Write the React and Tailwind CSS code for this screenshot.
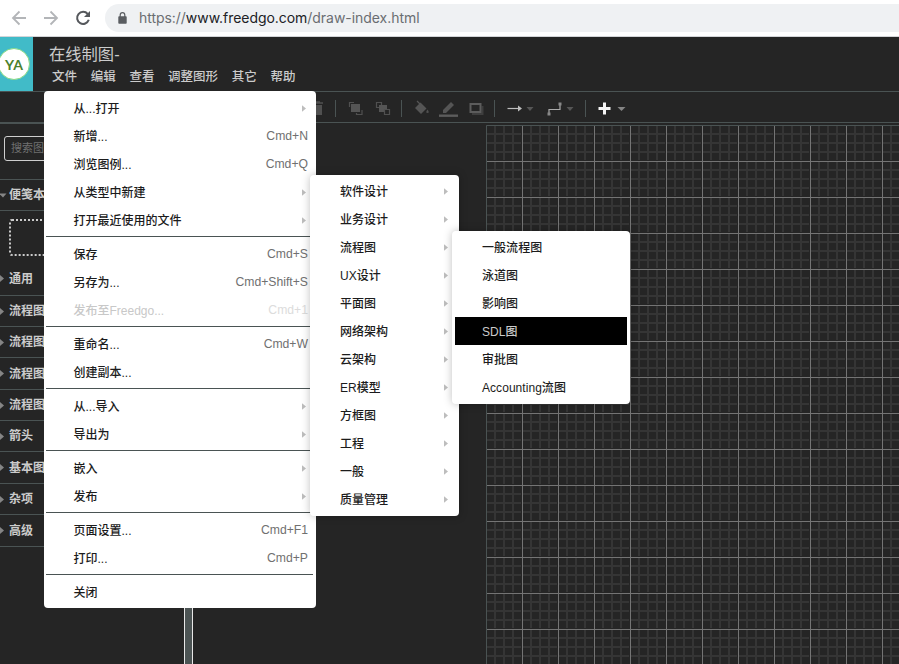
import React from "react";

const FILE_MENU = [
  { label: "从...打开", sub: true },
  { label: "新增...", key: "Cmd+N" },
  { label: "浏览图例...", key: "Cmd+Q" },
  { label: "从类型中新建", sub: true },
  { label: "打开最近使用的文件", sub: true },
  null,
  { label: "保存", key: "Cmd+S" },
  { label: "另存为...", key: "Cmd+Shift+S" },
  { label: "发布至Freedgo...", key: "Cmd+1", disabled: true },
  null,
  { label: "重命名...", key: "Cmd+W" },
  { label: "创建副本..." },
  null,
  { label: "从...导入", sub: true },
  { label: "导出为", sub: true },
  null,
  { label: "嵌入", sub: true },
  { label: "发布", sub: true },
  null,
  { label: "页面设置...", key: "Cmd+F1" },
  { label: "打印...", key: "Cmd+P" },
  null,
  { label: "关闭" },
];

const TYPE_MENU = ["软件设计", "业务设计", "流程图", "UX设计", "平面图", "网络架构", "云架构", "ER模型", "方框图", "工程", "一般", "质量管理"];
const FLOW_MENU = ["一般流程图", "泳道图", "影响图", "SDL图", "审批图", "Accounting流图"];

const SECTIONS = [
  { name: "流程图", h: "h-[31px]" },
  { name: "流程图", h: "h-[31px]" },
  { name: "流程图", h: "h-[32px]" },
  { name: "流程图", h: "h-[31px]" },
  { name: "箭头", h: "h-[31px]" },
  { name: "基本图形", h: "h-[32px]" },
  { name: "杂项", h: "h-[31px]" },
  { name: "高级", h: "h-[32px]" },
];

function SubArrow() {
  return (
    <svg className="h-[7px] w-1" viewBox="0 0 4 7">
      <path d="M0 0.3L4 3.5L0 6.7Z" fill="#bdbdbd" />
    </svg>
  );
}

function BrowserBar() {
  return (
    <div className="flex h-[37px] shrink-0 items-center border-b border-[#d3d5d8] bg-white">
      <svg className="h-[36px] w-[105px] shrink-0" viewBox="0 0 105 36" fill="none" strokeWidth="1.8">
        <path d="M26 18H13M19.5 11.5L13 18L19.5 24.5" stroke="#b3b5b8" />
        <path d="M44 18H57M50.5 11.5L57 18L50.5 24.5" stroke="#b3b5b8" />
        <path d="M87.7 14A6 6 0 1 0 88.8 19.8" stroke="#55585c" strokeWidth="2" />
        <path d="M90 11V17H84Z" fill="#55585c" />
      </svg>
      <div className="mr-[-20px] flex h-7 flex-1 items-center rounded-l-full bg-[#eff1f3] pl-[13px]">
        <svg className="h-3 w-[9px]" viewBox="0 0 9 12">
          <rect x="0.3" y="4.3" width="8.4" height="7.4" rx="0.8" fill="#5a5d61" />
          <path d="M2.2 5V3A2.3 2.3 0 0 1 6.8 3V5" fill="none" stroke="#5a5d61" strokeWidth="1.2" />
        </svg>
        <span className="ml-3 whitespace-nowrap pb-px font-['Inter','Liberation_Sans',sans-serif] text-[14px] tracking-[-0.045px] text-[#202124]">
          <span className="text-[#6a6d71]">https://</span>www.freedgo.com<span className="text-[#6a6d71]">/draw-index.html</span>
        </span>
      </div>
    </div>
  );
}

function Header() {
  return (
    <div className="flex h-[54px] shrink-0">
      <div className="flex w-[33px] items-center overflow-hidden bg-[#41bbc8]">
        <div className="-ml-[2px] flex size-8 shrink-0 items-center justify-center rounded-full border border-[#86d985] bg-white pt-px text-[14px] font-bold tracking-[0.2px] text-[#4b812d] font-['Lato',sans-serif]">
          YA
        </div>
      </div>
      <div className="flex flex-col pl-4 pt-[7px] text-[#cbcbcb]">
        <div className="h-5 whitespace-nowrap text-[16.3px] leading-5">在线制图-</div>
        <div className="mt-[3px] flex gap-[13.7px] whitespace-nowrap pl-[3px] text-[12.5px] font-medium leading-5">
          <span>文件</span>
          <span>编辑</span>
          <span>查看</span>
          <span>调整图形</span>
          <span>其它</span>
          <span>帮助</span>
        </div>
      </div>
    </div>
  );
}

function Toolbar() {
  return (
    <div className="h-8 shrink-0 border-y border-[#4a5353]">
      <svg className="ml-[300px] h-[30px] w-[340px]" viewBox="300 92 340 30" fill="none">
        <path d="M335.5 100V117M401.5 100V117M494.5 100V117M585.5 100V117" stroke="#4a5353" />
        <path d="M313 103H323M316 102H320" stroke="#505050" strokeWidth="1.6" />
        <path d="M314 105H322V115H314Z" fill="#505050" />
        <path d="M351 104H360V112H351Z" fill="#555" />
        <path d="M349.5 107V102.5H354M362 110V114.500H356.500V113" stroke="#505050" strokeWidth="1.2" />
        <path d="M376.500 102.500H381.500V107.500H376.500Z" stroke="#505050" strokeWidth="1.2" />
        <path d="M379 105H387V112H379Z" fill="#555" />
        <path d="M384.500 109.500H389.500V114.500H384.500Z" fill="#252525" stroke="#505050" strokeWidth="1.2" />
        <path d="M415 108L420.500 102.500L426.500 108.500L421 114Z" fill="#555" />
        <path d="M417 101L421 105" stroke="#555" strokeWidth="1.2" />
        <path d="M427.500 109.500Q430 113 427.500 113Q425 113 427.500 109.500" fill="#505050" />
        <path d="M443 110L451 102L454 105L446 113H443Z" fill="#555" />
        <path d="M439 115.700H458" stroke="#5c5c5c" strokeWidth="2.4" />
        <path d="M472 114H482.500V106" stroke="#3e3e3e" strokeWidth="2" />
        <path d="M470.500 104H480.500V112H470.500Z" stroke="#5c5c5c" strokeWidth="2" />
        <path d="M507.500 108.500H520" stroke="#bdbdbd" strokeWidth="1.2" />
        <path d="M518 105.500L522 108.500L518 111.500Z" fill="#bdbdbd" />
        <path d="M526.500 107H533.500L530 111Z" fill="#565656" />
        <path d="M549 114V109.500H560V104" stroke="#aaa" strokeWidth="1.2" />
        <path d="M547.500 112.500H550.500V115.500H547.500ZM558.500 102.500H561.500V105.500H558.500Z" fill="#888" />
        <path d="M566.500 107H573.500L570 111Z" fill="#565656" />
        <path d="M604.500 102.500V114.500M598.500 108.500H610.500" stroke="#f5f5f5" strokeWidth="3" />
        <path d="M617.500 107H625.500L621.500 111Z" fill="#858585" />
      </svg>
    </div>
  );
}

function Sidebar() {
  return (
    <div className="w-[184px] shrink-0 overflow-hidden text-[12px] font-bold text-[#cbcbcb]">
      <div className="h-[56px] border-t border-[#4a5353] pl-1 pt-3">
        <div className="flex h-[25px] w-[170px] items-center rounded-[3px] border border-[#cfcfcf] pl-[6px] text-[11px] font-normal text-[#707070]">
          搜索图形
        </div>
      </div>
      <div className="flex h-[32px] items-center gap-[2px] border-y border-[#4a5353]">
        <svg className="h-[5px] w-[7px]" viewBox="0 0 7 5"><path d="M-1 0.500H6.500L3 4.500Z" fill="#858585" /></svg>
        便笺本
      </div>
      <div className="ml-[9px] mt-2 h-[37px] w-[160px] rounded-[3px] border-2 border-dotted border-[#cbcbcb]" />
      <div className="flex h-[40px] items-center gap-[5px] border-b border-[#4a5353] pt-[6px]">
        <svg className="h-[9px] w-[4px]" viewBox="0 0 4 9"><path d="M0 1L4 4.500L0 8Z" fill="#858585" /></svg>
        通用
      </div>
      {SECTIONS.map((s, i) => (
        <div key={i} className={"flex items-center gap-[5px] border-b border-[#4a5353] " + s.h}>
          <svg className="h-[9px] w-[4px]" viewBox="0 0 4 9"><path d="M0 1L4 4.500L0 8Z" fill="#858585" /></svg>
          {s.name}
        </div>
      ))}
    </div>
  );
}

function Canvas() {
  return (
    <svg className="ml-[293px] mt-[2px] block h-[539px] w-[413px] shrink-0" viewBox="486 125 413 539">
      <defs>
        <pattern id="minor" x="494" y="133" width="9" height="9" patternUnits="userSpaceOnUse">
          <path d="M0 0H9V2H0ZM0 2H2V9H0Z" fill="#353535" />
        </pattern>
      </defs>
      <rect x="486" y="125" width="413" height="539" fill="url(#minor)" />
      <path
        d="M522 125V664M558 125V664M594 125V664M630 125V664M666 125V664M702 125V664M738 125V664M774 125V664M810 125V664M846 125V664M882 125V664M486 161H899M486 197H899M486 233H899M486 269H899M486 305H899M486 341H899M486 377H899M486 413H899M486 449H899M486 485H899M486 521H899M486 557H899M486 593H899M486 629H899"
        stroke="#252525"
        strokeWidth="2"
      />
      <path
        d="M522.500 125V664M558.500 125V664M594.500 125V664M630.500 125V664M666.500 125V664M702.500 125V664M738.500 125V664M774.500 125V664M810.500 125V664M846.500 125V664M882.500 125V664M486 161.500H899M486 197.500H899M486 233.500H899M486 269.500H899M486 305.500H899M486 341.500H899M486 377.500H899M486 413.500H899M486 449.500H899M486 485.500H899M486 521.500H899M486 557.500H899M486 593.500H899M486 629.500H899"
        stroke="#747474"
      />
      <path d="M486.500 664V125.500H899" fill="none" stroke="#4a5353" />
    </svg>
  );
}

export default function App() {
  return (
    <div className="relative flex h-[664px] w-[899px] flex-col overflow-hidden bg-[#252525] font-['Liberation_Sans','Noto_Sans_CJK_SC',sans-serif]">
      <BrowserBar />
      <Header />
      <Toolbar />
      <div className="flex min-h-0 flex-1">
        <Sidebar />
        <div className="w-[9px] shrink-0 border-x border-[#e8e8e8] bg-[#4c5454]" />
        <Canvas />
      </div>

      <div className="absolute left-[44px] top-[91px] h-[517px] w-[272px] rounded bg-white pt-[3px] text-[12px] font-medium text-[#1c1c1c]">
        {FILE_MENU.map((m, i) =>
          m ? (
            <div key={i} className={"flex h-7 items-center justify-between pl-[29.5px] " + (m.disabled ? "text-[#c8c8c8]" : "")}>
              <span className="pt-[2px]">{m.label}</span>
              {m.sub && <span className="mr-[10px]"><SubArrow /></span>}
              {m.key && (
                <span className={"mr-[8px] pt-px text-[12.2px] font-normal " + (m.disabled ? "text-[#dcdcdc]" : "text-[#707070]")}>{m.key}</span>
              )}
            </div>
          ) : (
            <div key={i} className="ml-[2px] mr-[3px] h-[6px] pt-[2px]">
              <div className="h-px bg-[#4a5353]" />
            </div>
          )
        )}
      </div>

      <div className="absolute left-[310px] top-[175px] h-[341px] w-[149px] rounded bg-white pt-[2px] text-[12px] font-medium text-[#1c1c1c] shadow-[0_0_8px_rgba(0,0,0,0.25)]">
        {TYPE_MENU.map((t) => (
          <div key={t} className="flex h-7 items-center justify-between pl-[30px] pr-[11px]">
            <span className="pt-[2px]">{t}</span>
            <SubArrow />
          </div>
        ))}
      </div>

      <div className="absolute left-[452px] top-[231px] h-[173px] w-[178px] rounded bg-white px-[3px] pt-[2px] text-[12px] font-medium text-[#1c1c1c] shadow-[0_0_8px_rgba(0,0,0,0.25)]">
        {FLOW_MENU.map((t) => (
          <div key={t} className={"flex h-7 items-center pl-[27px] pt-[2px] tracking-[0.05px] " + (t === "SDL图" ? "bg-black text-[#cbcbcb]" : "")}>
            {t}
          </div>
        ))}
      </div>
    </div>
  );
}
